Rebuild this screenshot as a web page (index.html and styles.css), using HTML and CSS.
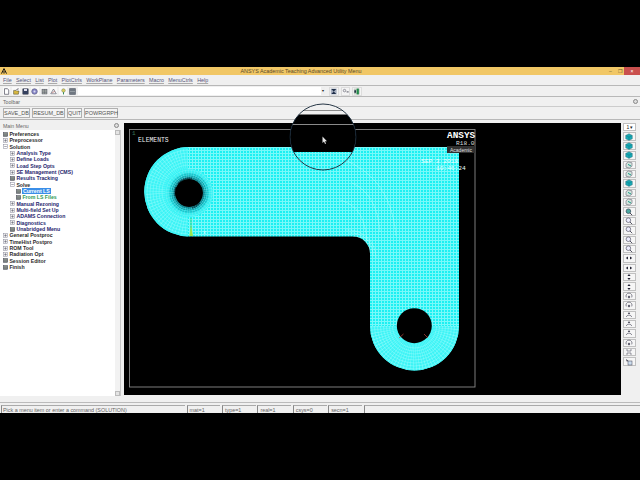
FILE: index.html
```html
<!DOCTYPE html>
<html lang="en">
<head>
<meta charset="utf-8">
<title>ANSYS Academic Teaching Advanced Utility Menu</title>
<link rel="stylesheet" href="styles.css">
</head>
<body>
<svg class="defs" width="0" height="0" aria-hidden="true">
  <defs>
    <symbol id="cube" viewBox="0 0 8 8"><path d="M4 .7 7.3 2.4V5.8L4 7.4.7 5.8V2.4Z" fill="#16a8b4" stroke="#4a7a80" stroke-width=".5"/><path d="M.9 2.5 4 4.1 7.1 2.5M4 4.1V7.2" fill="none" stroke="#0b6e78" stroke-width=".4"/></symbol>
    <symbol id="cubeg" viewBox="0 0 8 8"><path d="M1 2.6 3.4 1 7 1.8V5.2L4.4 7 1 6.2Z" fill="#d4e4dc" stroke="#667" stroke-width=".6"/><path d="M3 3.4 6 5" stroke="#1a9a8a" stroke-width="1"/></symbol>
    <symbol id="mag" viewBox="0 0 8 8"><circle cx="3.4" cy="3.2" r="2.3" fill="#eef" stroke="#556" stroke-width=".7"/><path d="M5 5 7.2 7.2" stroke="#445" stroke-width=".9"/></symbol>
    <symbol id="magf" viewBox="0 0 8 8"><circle cx="3.4" cy="3.2" r="2.3" fill="#4aa8a0" stroke="#345" stroke-width=".7"/><path d="M5 5 7.2 7.2" stroke="#334" stroke-width=".9"/></symbol>
    <symbol id="lr" viewBox="0 0 8 8"><path d="M.8 4 3 2.4V5.6ZM7.2 4 5 2.4V5.6Z" fill="#223"/></symbol>
    <symbol id="up" viewBox="0 0 8 8"><path d="M4 1 5.6 3H2.4ZM4 7 5.6 5H2.4Z" fill="#223"/></symbol>
    <symbol id="rot" viewBox="0 0 8 8"><path d="M1.3 5.4A3 3 0 1 1 6.7 5.4" fill="none" stroke="#556" stroke-width=".7"/><path d="M2.7 5 4 3.6 5.3 5 4 6.4Z" fill="#445"/></symbol>
    <symbol id="arc" viewBox="0 0 8 8"><path d="M1.2 6A3 3 0 0 1 6.8 6" fill="none" stroke="#556" stroke-width=".7"/><path d="M4 1 5.2 3H2.8Z" fill="#445"/></symbol>
    <symbol id="grid" viewBox="0 0 5 5"><rect x=".3" y=".5" width="4.4" height="4" fill="#9aa49a" stroke="#445" stroke-width=".5"/><path d="M.5 2H4.5M.5 3.3H4.5" stroke="#334" stroke-width=".4"/></symbol>
    <symbol id="plus" viewBox="0 0 5 5"><rect x=".6" y=".6" width="3.8" height="3.8" fill="#eee" stroke="#889" stroke-width=".5"/><path d="M1.2 2.5H3.8M2.5 1.2V3.8" stroke="#556" stroke-width=".5"/></symbol>
    <symbol id="minus" viewBox="0 0 5 5"><rect x=".6" y=".6" width="3.8" height="3.8" fill="#fff" stroke="#889" stroke-width=".5"/><path d="M1.2 2.5H3.8" stroke="#556" stroke-width=".5"/></symbol>
    <pattern id="mesh" width="3" height="3" patternUnits="userSpaceOnUse"><rect width="3" height="3" fill="#1cf0f2"/><path d="M0 .5H3M.5 0V3" stroke="#78f9f9" stroke-width="1"/></pattern>
    <clipPath id="lens"><circle cx="323" cy="137" r="33"/></clipPath>
    <clipPath id="part"><path d="M189 147H459V326A44.5 44.5 0 0 1 370 326V254A17 17 0 0 0 353 236.5H189A44.7 44.7 0 0 1 189 147Z"/></clipPath>
    <clipPath id="leftend"><rect x="140" y="140" width="48" height="100"/></clipPath>
    <clipPath id="lower"><rect x="365" y="326" width="100" height="50"/></clipPath>
  </defs>
</svg>
<div class="app">
  <header class="title">
    <svg class="logo" viewBox="0 0 6 6"><path d="M.5 5.6 3 .6 5.5 5.6M3 3V5.6" fill="none" stroke="#111" stroke-width="1"/></svg>
    <span class="title-text">ANSYS Academic Teaching Advanced Utility Menu</span>
    <span class="winbtns"><span class="wb">&#8211;</span><span class="wb">&#10064;</span><span class="wb close">&#215;</span></span>
  </header>
  <nav class="menu">
    <span>File</span><span>Select</span><span>List</span><span>Plot</span><span>PlotCtrls</span><span>WorkPlane</span><span>Parameters</span><span>Macro</span><span>MenuCtrls</span><span>Help</span>
  </nav>
  <div class="cmdrow">
    <span class="ic"><svg viewBox="0 0 7 7"><path d="M1.5 .7H4.5L5.7 2V6.3H1.5Z" fill="#fff" stroke="#334" stroke-width=".6"/></svg></span>
    <span class="ic"><svg viewBox="0 0 7 7"><path d="M.6 6.2V2.4H3L3.6 3H6L5.4 6.2Z" fill="#d8b840" stroke="#443" stroke-width=".5"/><path d="M3.5 1.5 5.6.8" stroke="#223" stroke-width=".7"/></svg></span>
    <span class="ic"><svg viewBox="0 0 7 7"><rect x=".8" y=".8" width="5.4" height="5.4" fill="#34405e" stroke="#223" stroke-width=".4"/><rect x="2" y="1" width="3" height="2" fill="#dde"/></svg></span>
    <span class="ic"><svg viewBox="0 0 7 7"><circle cx="3.5" cy="3.5" r="2.8" fill="#8888c8" stroke="#446" stroke-width=".5"/><circle cx="3.5" cy="3.5" r="1" fill="#dde"/></svg></span>
    <span class="ic"><svg viewBox="0 0 7 7"><rect x="1" y="1.2" width="5" height="4.8" fill="#a8b0a8" stroke="#445" stroke-width=".5"/><path d="M1 3H6M1 4.5H6M3.5 1V6" stroke="#556" stroke-width=".4"/></svg></span>
    <span class="ic"><svg viewBox="0 0 7 7"><path d="M3.5 1 6.3 5.8H.7Z" fill="#eee" stroke="#556" stroke-width=".6"/><path d="M2 5 5 3" stroke="#a44" stroke-width=".5"/></svg></span>
    <span class="ic"><svg viewBox="0 0 7 7"><circle cx="3.5" cy="2.5" r="1.8" fill="#d8d060" stroke="#665" stroke-width=".4"/><path d="M3.5 4.2V6.4" stroke="#385" stroke-width="1"/></svg></span>
    <span class="ic dark"><svg viewBox="0 0 7 7"><rect x=".3" y=".3" width="6.4" height="6.4" fill="#4a5260"/><path d="M1 2H6M1 3.5H6M1 5H6" stroke="#c8d0d0" stroke-width=".6"/></svg></span>
    <div class="cmdinput"><span class="cmdarrow">&#9662;</span></div>
    <span class="ic big"><svg viewBox="0 0 9 9"><rect x="1" y="1" width="7" height="7" fill="#a8b0c0"/><path d="M1.5 1.5H7.5L4.5 4.5 7.5 7.5H1.5L4.5 4.5Z" fill="#1e2e48"/></svg></span>
    <span class="ic big"><svg viewBox="0 0 9 9"><circle cx="3" cy="3.4" r="1.5" fill="#eee" stroke="#445" stroke-width=".6"/><path d="M5.5 5 8 5" stroke="#223" stroke-width=".9"/></svg></span>
    <span class="ic big"><svg viewBox="0 0 9 9"><rect x="1" y="1" width="7" height="7" fill="#c0c8c0"/><rect x="4.4" y="1" width="2.6" height="7" fill="#208a48"/><rect x="1.6" y="3" width="2" height="3" fill="#234"/></svg></span>
  </div>
  <div class="tblabel"><span>Toolbar</span><span class="dot"></span></div>
  <div class="tbbtns">
    <button class="b b1">SAVE_DB</button><button class="b b2">RESUM_DB</button><button class="b b3">QUIT</button><button class="b b4">POWRGRPH</button>
  </div>
  <main class="main">
    <aside class="side">
      <div class="sidehead"><span>Main Menu</span><span class="dot"></span></div>
      <div class="treebox">
        <ul class="tree">
          <li class="l1"><svg><use href="#grid"/></svg>Preferences</li>
          <li class="l1"><svg><use href="#plus"/></svg>Preprocessor</li>
          <li class="l1"><svg><use href="#minus"/></svg>Solution</li>
          <li class="l2"><svg><use href="#plus"/></svg>Analysis Type</li>
          <li class="l2"><svg><use href="#plus"/></svg>Define Loads</li>
          <li class="l2"><svg><use href="#plus"/></svg>Load Step Opts</li>
          <li class="l2"><svg><use href="#plus"/></svg>SE Management (CMS)</li>
          <li class="l2"><svg><use href="#grid"/></svg>Results Tracking</li>
          <li class="l2 solve"><svg><use href="#minus"/></svg>Solve</li>
          <li class="l3"><svg><use href="#grid"/></svg><span class="sel">Current LS</span></li>
          <li class="l3 green"><svg><use href="#grid"/></svg>From LS Files</li>
          <li class="l2"><svg><use href="#plus"/></svg>Manual Rezoning</li>
          <li class="l2"><svg><use href="#plus"/></svg>Multi-field Set Up</li>
          <li class="l2"><svg><use href="#plus"/></svg>ADAMS Connection</li>
          <li class="l2"><svg><use href="#plus"/></svg>Diagnostics</li>
          <li class="l2"><svg><use href="#grid"/></svg>Unabridged Menu</li>
          <li class="l1"><svg><use href="#plus"/></svg>General Postproc</li>
          <li class="l1"><svg><use href="#plus"/></svg>TimeHist Postpro</li>
          <li class="l1"><svg><use href="#plus"/></svg>ROM Tool</li>
          <li class="l1"><svg><use href="#plus"/></svg>Radiation Opt</li>
          <li class="l1"><svg><use href="#grid"/></svg>Session Editor</li>
          <li class="l1"><svg><use href="#grid"/></svg>Finish</li>
        </ul>
        <div class="vscroll"><span class="sa"></span><span class="sa"></span></div>
      </div>
    </aside>
    <section class="canvas">
      <svg class="plot" viewBox="124 123 497 272" width="497" height="272" role="img" aria-label="ANSYS elements plot">
        <rect x="129.5" y="129.5" width="345.5" height="257.5" fill="none" stroke="#8a8a8a" stroke-width=".9"/>
        <text class="t1" x="132" y="135">1</text>
        <text class="tm" x="138" y="142">ELEMENTS</text>
        <path d="M189 147H459V326A44.5 44.5 0 0 1 370 326V254A17 17 0 0 0 353 236.5H189A44.7 44.7 0 0 1 189 147Z" fill="url(#mesh)"/>
        <g clip-path="url(#part)">
          <g fill="none" stroke-width=".5" opacity=".7">
            <path d="M345 160C372 172 392 192 396 236M352 183C368 190 378 206 380 232M340 200C356 205 364 214 367 240" stroke="#d0ffff"/>
            <path d="M353 236.5A17 17 0 0 1 370 254M349 233A22 22 0 0 1 373 256M345 230A28 28 0 0 1 376 258" stroke="#d0ffff"/>
          </g>
          <g clip-path="url(#leftend)">
            <rect x="140" y="140" width="48" height="100" fill="#3cf4f6"/>
            <g fill="none" stroke="#90fbfb" stroke-width=".5">
              <circle cx="189" cy="192" r="42"/><circle cx="189" cy="192" r="39"/><circle cx="189" cy="192" r="36"/><circle cx="189" cy="192" r="33"/><circle cx="189" cy="192" r="30"/><circle cx="189" cy="192" r="27"/>
              <circle cx="189" cy="192" r="33" stroke-width="20" stroke-dasharray=".5 2.1" opacity=".8"/>
            </g>
          </g>
          <circle cx="189" cy="193" r="24" fill="#34f2f4"/>
          <g fill="none">
            <circle cx="189" cy="193" r="23" stroke="#8afafa" stroke-width=".4"/>
            <circle cx="189" cy="193" r="21" stroke="#4ee4e8" stroke-width=".6"/>
            <circle cx="189" cy="193" r="19" stroke="#1cc4cc" stroke-width="1.4"/>
            <circle cx="189" cy="193" r="17" stroke="#16a4ae" stroke-width="1.4"/>
            <circle cx="189" cy="193" r="15" stroke="#0e8490" stroke-width="1.8"/>
            <path d="M178 184A14.5 14.5 0 0 1 192 178.5M175 196A15 15 0 0 1 176 187M200 203A15 15 0 0 1 192 208" stroke="#0a4a56" stroke-width="1.4"/>
            <circle cx="189" cy="193" r="19" stroke="#a0f4f6" stroke-width="9" stroke-dasharray=".4 2.2" opacity=".6"/>
          </g>
          <g clip-path="url(#lower)">
            <rect x="365" y="326" width="100" height="50" fill="#3cf4f6"/>
            <g fill="none" stroke="#a0fcfc" stroke-width=".45">
              <circle cx="414.5" cy="326" r="43"/><circle cx="414.5" cy="326" r="40"/><circle cx="414.5" cy="326" r="37"/><circle cx="414.5" cy="326" r="34"/><circle cx="414.5" cy="326" r="31"/><circle cx="414.5" cy="326" r="28"/><circle cx="414.5" cy="326" r="25"/><circle cx="414.5" cy="326" r="22"/>
              <circle cx="414.5" cy="326" r="31" stroke-width="27" stroke-dasharray=".45 1.9" opacity=".7"/>
            </g>
          </g>
        </g>
        <circle cx="189" cy="193" r="14" fill="#000"/>
        <circle cx="414.3" cy="325.7" r="17.5" fill="#000"/>
        <path d="M403.5 334 399 338M424 334 428 338" stroke="#c04a40" stroke-width=".7"/>
        <path d="M191 218V236" stroke="#50d060" stroke-width=".7"/>
        <path d="M191 225 189.4 236H193Z" fill="#98e850"/>
        <text class="tx" x="203" y="234">x</text>
        <text class="tb" x="447" y="138">ANSYS</text>
        <text class="tv" x="456" y="144.5">R18.0</text>
        <rect x="447" y="146" width="28" height="7" fill="#303030"/>
        <text class="ta" x="450" y="151.6">Academic</text>
        <text class="td" x="421" y="162.5">SEP  3 2018</text>
        <text class="td" x="436" y="169.5">10:46:24</text>
      </svg>
    </section>
    <aside class="rtool">
      <span class="rb drop"><span class="one">1</span><span class="ar">&#9662;</span></span>
      <span class="rb"><svg><use href="#cube"/></svg></span>
      <span class="rb"><svg><use href="#cube"/></svg></span>
      <span class="rb"><svg><use href="#cube"/></svg></span>
      <span class="rb"><svg><use href="#cubeg"/></svg></span>
      <span class="rb"><svg><use href="#cubeg"/></svg></span>
      <span class="rb"><svg><use href="#cube"/></svg></span>
      <span class="rb"><svg><use href="#cubeg"/></svg></span>
      <span class="rb"><svg><use href="#cubeg"/></svg></span>
      <span class="rb"><svg><use href="#magf"/></svg></span>
      <span class="rb"><svg><use href="#mag"/></svg></span>
      <span class="rb"><svg><use href="#mag"/></svg></span>
      <span class="rb"><svg><use href="#mag"/></svg></span>
      <span class="rb"><svg><use href="#mag"/></svg></span>
      <span class="rb"><svg><use href="#lr"/></svg></span>
      <span class="rb"><svg><use href="#lr"/></svg></span>
      <span class="rb"><svg><use href="#up"/></svg></span>
      <span class="rb"><svg><use href="#up"/></svg></span>
      <span class="rb"><svg><use href="#rot"/></svg></span>
      <span class="rb"><svg><use href="#rot"/></svg></span>
      <span class="rb"><svg><use href="#arc"/></svg></span>
      <span class="rb"><svg><use href="#arc"/></svg></span>
      <span class="rb"><svg><use href="#arc"/></svg></span>
      <span class="rb"><svg><use href="#rot"/></svg></span>
      <span class="rb"><svg viewBox="0 0 8 8"><path d="M1 2H3V6H1M7 2H5V6H7" fill="none" stroke="#556" stroke-width=".6"/></svg></span>
      <span class="rb"><svg viewBox="0 0 8 8"><path d="M1 1 3.4 3 1.8 3.6Z" fill="#223"/><rect x="3" y="3" width="4" height="4" fill="#cde" stroke="#445" stroke-width=".5"/></svg></span>
    </aside>
  </main>
  <footer class="status">
    <span class="sf s0">Pick a menu item or enter a command (SOLUTION)</span>
    <span class="sf s1">mat=1</span><span class="sf s1">type=1</span><span class="sf s1">real=1</span><span class="sf s1">csys=0</span><span class="sf s1">secn=1</span>
    <span class="sf s2"></span>
  </footer>
  <svg class="lens" viewBox="288 102 70 70" width="70" height="70" aria-hidden="true">
    <g clip-path="url(#lens)">
      <rect x="288" y="102" width="70" height="70" fill="#f0f0f0"/>
      <rect x="288" y="110" width="70" height="1" fill="#8c8c8c"/>
      <rect x="288" y="114.5" width="70" height="10" fill="#000"/>
      <rect x="288" y="124" width="70" height="1" fill="#8a8a8a"/>
      <rect x="288" y="125" width="70" height="27" fill="#000"/>
      <rect x="288" y="152" width="70" height="20" fill="url(#mesh)"/>
      <path d="M322.5 136.5V143L324 141.6 325 144 326 143.6 325 141.2H327Z" fill="#e8e8e8"/>
    </g>
    <circle cx="323" cy="137" r="33" fill="none" stroke="#123" stroke-width=".9"/>
  </svg>
</div>
</body>
</html>
```

FILE: styles.css
```css
* { box-sizing: border-box; }
html, body { margin: 0; height: 100%; background: #000; overflow: hidden; }
body { font-family: "Liberation Sans", Arial, sans-serif; font-size: 5.4px; color: #333; }
.defs { position: absolute; }
.app { position: relative; margin-top: 67px; height: 346px; width: 640px; background: #f0f0f0; display: flex; flex-direction: column; }

.title { height: 8px; background: #f1c766; display: flex; align-items: center; position: relative; padding-left: 1px; }
.logo { width: 6px; height: 6px; }
.title-text { flex: 1; text-align: center; color: #5a4a2a; font-size: 5.4px; margin-right: 39px; margin-left: -6px; }
.winbtns { position: absolute; right: 0; top: 0; height: 8px; display: flex; align-items: center; }
.wb { width: 9px; text-align: center; font-size: 5px; line-height: 8px; color: #6a5a30; }
.wb.close { width: 16px; height: 8px; background: #c9504e; color: #fff; }

.menu { height: 10px; display: flex; align-items: center; padding-left: 3px; gap: 4.3px; font-size: 5.4px; color: #55557a; }
.menu span { text-decoration: underline; text-decoration-thickness: .3px; text-decoration-color: #aaa; text-underline-offset: .6px; }

.cmdrow { height: 12px; display: flex; align-items: center; padding-left: 3px; gap: 2px; border-top: 1px solid #b8b8b8; border-bottom: 1px solid #b8b8b8; }
.ic { width: 7.4px; height: 8px; display: flex; align-items: center; justify-content: center; background: #fafafa; }
.ic svg { width: 7px; height: 7px; }
.ic.dark { background: none; }
.cmdinput { width: 247px; height: 8px; background: #fff; margin-right: 2px; position: relative; }
.cmdarrow { position: absolute; right: 0; top: 0; width: 4px; height: 8px; background: #eee; font-size: 4px; line-height: 8px; text-align: center; color: #222; }
.ic.big { width: 9.5px; height: 9px; border: 1px solid #ddd; background: #f4f4f4; }
.ic.big svg { width: 9px; height: 9px; }

.tblabel { height: 9px; display: flex; align-items: center; justify-content: space-between; padding: 0 2px 0 3px; font-size: 5.2px; color: #666; }
.dot { width: 5px; height: 5px; border: .7px solid #888; border-radius: 50%; background: #ddd; display: block; }
.tbbtns { height: 14px; display: flex; align-items: flex-start; padding: 1px 0 0 3px; gap: 2px; border-top: 1px solid #ccc; border-bottom: 1px solid #b8b8b8; }
.b { height: 9.5px; padding: 0; margin: 0; background: #f4f4f4; border: .6px solid #b0b0b0; font: 5.5px "Liberation Sans", Arial, sans-serif; color: #555; text-align: center; }
.b1 { width: 27px; }
.b2 { width: 33px; }
.b3 { width: 15px; }
.b4 { width: 34px; }

.main { flex: 1; display: flex; min-height: 0; }
.side { width: 124px; flex: none; display: flex; flex-direction: column; }
.sidehead { height: 10px; flex: none; display: flex; align-items: center; justify-content: space-between; padding: 1px 5px 0 3px; font-size: 5.2px; color: #666; }
.treebox { height: 266px; flex: none; background: #fff; position: relative; display: flex; border-right: 1px solid #c8c8c8; margin-right: 3px; }
.tree { list-style: none; margin: 0; padding: 1px 0 0; flex: 1; font-weight: 700; font-size: 5.2px; }
.tree li { height: 6.33px; line-height: 6.33px; white-space: nowrap; display: flex; align-items: center; }
.tree svg { width: 5px; height: 5px; flex: none; margin-right: 1.4px; }
.l1 { padding-left: 3px; color: #2a2a2a; }
.l2 { padding-left: 10px; color: #26266e; }
.l2.solve { color: #2a2a2a; }
.l3 { padding-left: 16px; color: #26266e; }
.l3.green { color: #2f9a54; }
.sel { background: #3a8ee8; color: #fff; padding: 0 1px; margin-left: -.5px; }
.vscroll { width: 5px; flex: none; background: #f2f2f2; display: flex; flex-direction: column; justify-content: space-between; }
.sa { width: 5px; height: 5px; background: #e4e4e4; border: .5px solid #bbb; display: block; }

.canvas { flex: 1; padding-top: 3px; min-width: 0; }
.plot { display: block; background: #000; }
.t1 { font: 6px "Liberation Mono", monospace; fill: #3a7a5a; }
.tm { font: 6.4px "Liberation Mono", monospace; fill: #eeeeee; }
.tb { font: 700 9.4px "Liberation Mono", monospace; fill: #fff; }
.tv { font: 6.2px "Liberation Mono", monospace; fill: #ddd; }
.ta { font: 5px "Liberation Sans", sans-serif; fill: #e0e0e0; }
.td { font: 6.2px "Liberation Mono", monospace; fill: #e8ffff; }
.tx { font: 5px "Liberation Mono", monospace; fill: #e8ffff; }

.rtool { width: 19px; flex: none; display: flex; flex-direction: column; justify-content: space-between; align-items: center; padding: 3px 3px 36px 0; height: 282px; }
.rb { width: 13px; height: 8.4px; background: #f6f6f6; border: .5px solid #c0c0c0; display: flex; align-items: center; justify-content: center; }
.rb svg { width: 8px; height: 8px; }
.rb.drop { background: #fff; justify-content: space-between; padding: 0 2px 0 3px; font-size: 5px; color: #222; }
.one, .ar { line-height: 7px; font-size: 5px; }

.status { height: 11px; flex: none; display: flex; align-items: center; gap: 1.6px; padding: 1px 0 0 1px; border-top: 1px solid #bbb; }
.sf { height: 8px; line-height: 8px; border-left: .6px solid #888; border-top: .6px solid #aaa; font-size: 5.4px; color: #666; padding-left: 1px; white-space: nowrap; overflow: hidden; }
.s0 { width: 184px; }
.s1 { width: 33.8px; padding-left: 2px; }
.s2 { flex: 1; }

.lens { position: absolute; left: 288px; top: 35px; }
```
